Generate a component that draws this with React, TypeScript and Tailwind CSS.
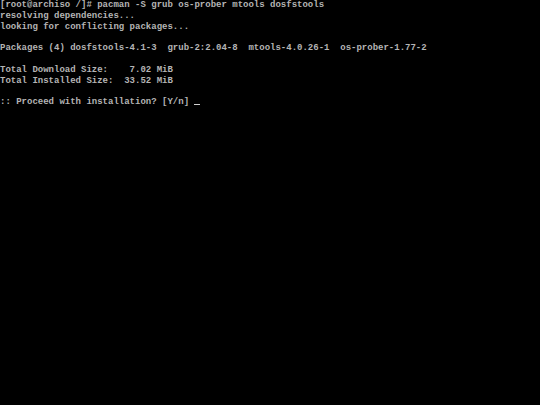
const lines = [
  '[root@archiso /]# pacman -S grub os-prober mtools dosfstools',
  'resolving dependencies...',
  'looking for conflicting packages...',
  '',
  'Packages (4) dosfstools-4.1-3  grub-2:2.04-8  mtools-4.0.26-1  os-prober-1.77-2',
  '',
  'Total Download Size:    7.02 MiB',
  'Total Installed Size:  33.52 MiB',
  '',
];

export default function App() {
  return (
    <div className="w-[540px] h-[405px] bg-black overflow-hidden">
      <pre className="m-0 text-[9px] leading-[10.8px] text-[#b4b4b4] font-[Liberation_Mono,monospace] font-bold whitespace-pre">
        {lines.map((l, i) => (
          <div key={i} className="h-[10.8px]">{l}</div>
        ))}
        <div className="h-[10.8px]">
          {':: Proceed with installation? [Y/n] '}
          <span className="inline-block w-[5.4px] h-[1.5px] bg-[#d0d0d0] align-[-1px]" />
        </div>
      </pre>
    </div>
  );
}
